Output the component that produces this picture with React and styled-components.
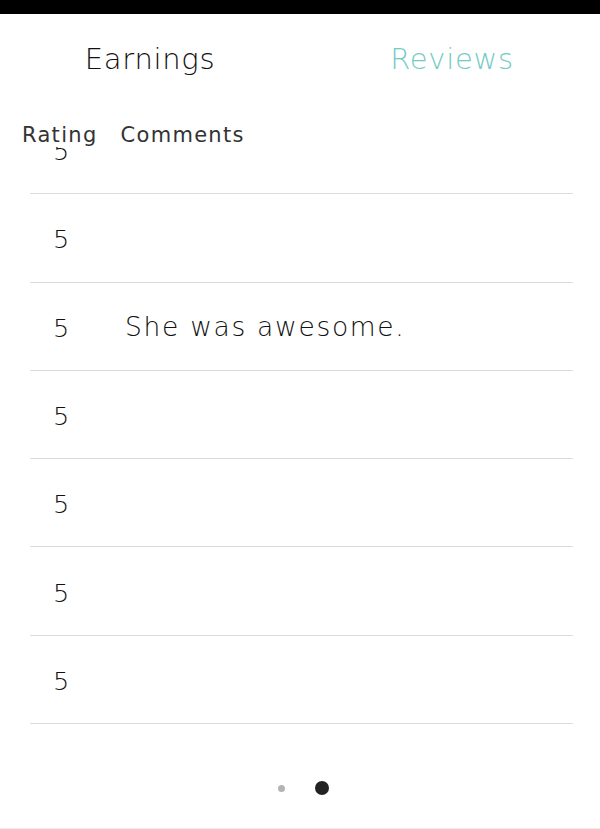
import React from "react";
import styled, { createGlobalStyle } from "styled-components";

const Global = createGlobalStyle`
  html, body { margin: 0; padding: 0; background: #fff; }
  body { font-family: "DejaVu Sans", "Open Sans", sans-serif; }
`;

const Screen = styled.div`
  width: 600px;
  height: 829px;
  display: flex;
  flex-direction: column;
  background: #fff;
  overflow: hidden;
`;

const StatusBar = styled.div`
  height: 14px;
  background: #000;
  flex: none;
`;

const Tabs = styled.div`
  display: flex;
  height: 88px;
  flex: none;
  align-items: center;
`;

const Tab = styled.div`
  flex: 1;
  text-align: center;
  font-size: 29px;
  font-weight: 200;
  letter-spacing: 0.7px;
  color: ${(p) => (p.$active ? "#74cbc5" : "#111")};
  padding-top: 1px;
  padding-left: ${(p) => (p.$active ? 6 : 2)}px;
`;

const Header = styled.div`
  display: flex;
  height: 45px;
  flex: none;
  align-items: flex-end;
  padding-left: 22px;
  font-size: 21px;
  font-weight: 400;
  color: #333;
  letter-spacing: 1.3px;
  line-height: 1;
  padding-bottom: 1px;
  box-sizing: border-box;
`;

const HeaderCell = styled.span`
  margin-right: ${(p) => p.$gap || 0}px;
`;

const ListViewport = styled.div`
  flex: none;
  height: 594px;
  overflow: hidden;
`;

const List = styled.div`
  margin-top: -41px;
  padding: 0 27px 0 30px;
`;

const Row = styled.div`
  display: flex;
  align-items: center;
  height: 88.3px;
  box-sizing: border-box;
  border-bottom: 1.5px solid #dcdcdc;
  font-weight: 200;
  color: #111;
`;

const Rating = styled.div`
  width: 95px;
  padding-left: 23px;
  padding-top: 3px;
  box-sizing: border-box;
  font-size: 25.5px;
`;

const Comment = styled.div`
  font-size: 26.5px;
  letter-spacing: 1.7px;
`;

const Pager = styled.div`
  flex: 1;
  display: flex;
  align-items: center;
  justify-content: center;
  gap: 30px;
  border-bottom: 1px solid #eee;
  padding-left: 7px;
  padding-top: 7px;
`;

const Dot = styled.span`
  width: ${(p) => (p.$active ? 14 : 7)}px;
  height: ${(p) => (p.$active ? 14 : 7)}px;
  border-radius: 50%;
  background: ${(p) => (p.$active ? "#222" : "#b4b4b4")};
`;

const rows = [
  { r: 5, c: "" },
  { r: 5, c: "" },
  { r: 5, c: "She was awesome." },
  { r: 5, c: "" },
  { r: 5, c: "" },
  { r: 5, c: "" },
  { r: 5, c: "" },
];

export default function App() {
  return (
    <Screen>
      <Global />
      <StatusBar />
      <Tabs>
        <Tab>Earnings</Tab>
        <Tab $active>Reviews</Tab>
      </Tabs>
      <Header>
        <HeaderCell $gap={23}>Rating</HeaderCell>
        <HeaderCell>Comments</HeaderCell>
      </Header>
      <ListViewport>
        <List>
          {rows.map((row, i) => (
            <Row key={i}>
              <Rating>{row.r}</Rating>
              <Comment>{row.c}</Comment>
            </Row>
          ))}
        </List>
      </ListViewport>
      <Pager>
        <Dot />
        <Dot $active />
      </Pager>
    </Screen>
  );
}
